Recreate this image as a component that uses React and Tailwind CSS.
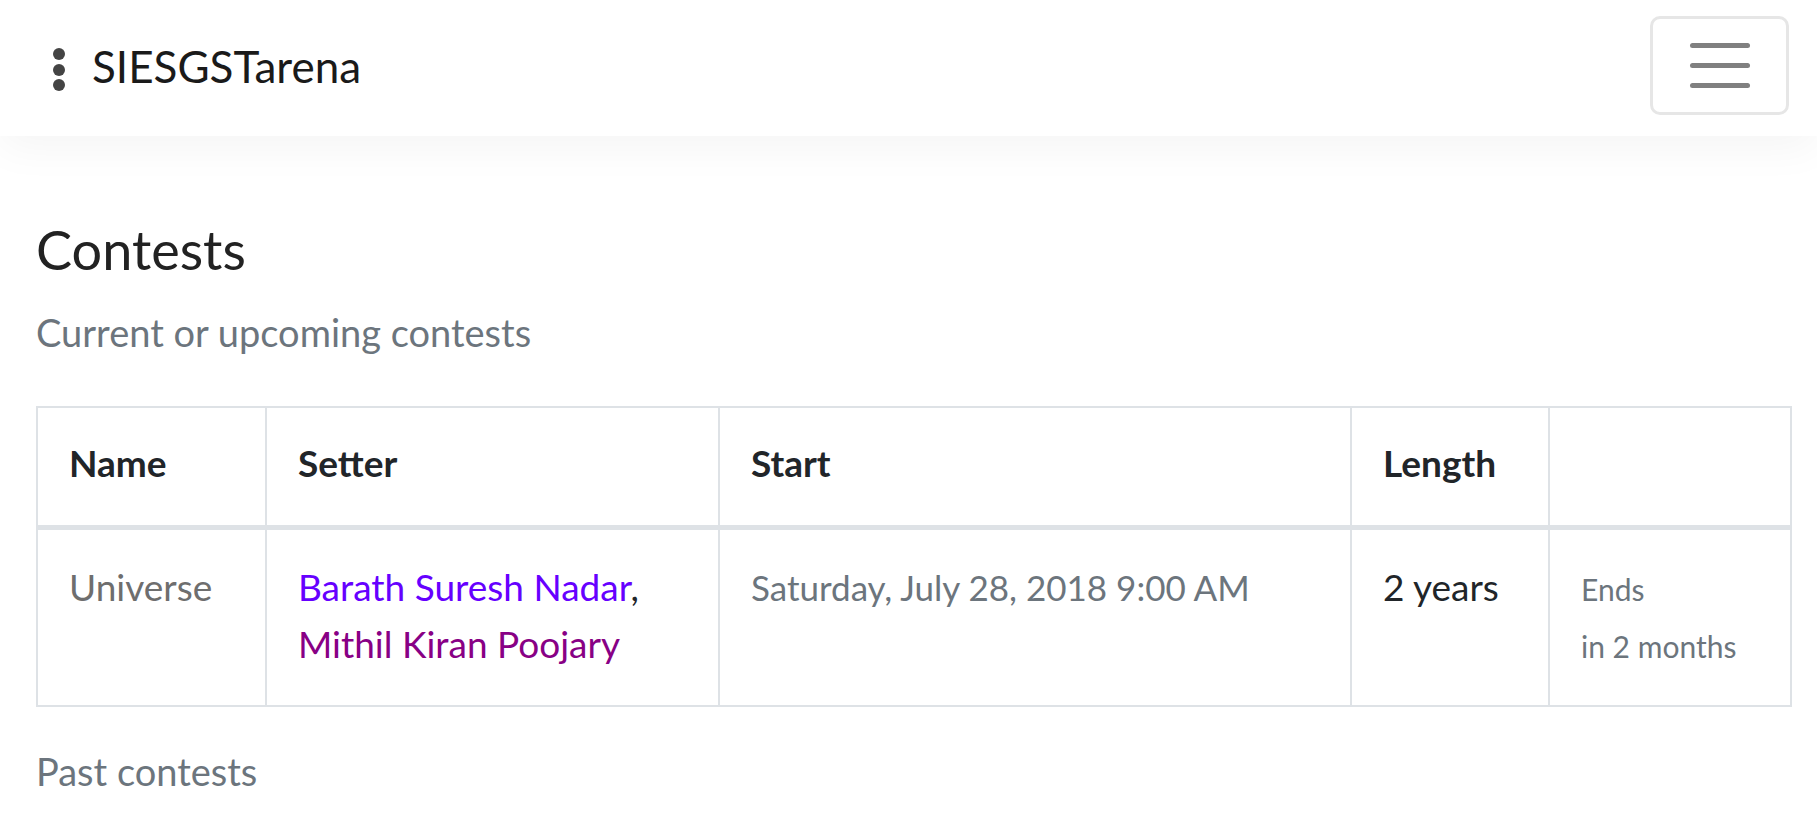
import React from 'react'

const CELL = 'border-2 border-[#dee2e6] pl-[31px] text-left align-top'

function Kebab() {
  return (
    <span className="flex flex-col items-center gap-[3.5px] pt-[8px]" aria-hidden="true">
      <span className="h-[12px] w-[12px] rounded-full bg-[#444]" />
      <span className="h-[12px] w-[12px] rounded-full bg-[#444]" />
      <span className="h-[12px] w-[12px] rounded-full bg-[#444]" />
    </span>
  )
}

function Burger() {
  return (
    <button
      type="button"
      className="flex h-[99px] w-[139px] flex-col items-center justify-center gap-[15px] rounded-[10px] border-[3px] border-[#e6e6e6] bg-white"
      aria-label="Toggle navigation"
    >
      <span className="h-[5px] w-[60px] rounded-full bg-[#808080]" />
      <span className="h-[5px] w-[60px] rounded-full bg-[#808080]" />
      <span className="h-[5px] w-[60px] rounded-full bg-[#808080]" />
    </button>
  )
}

export default function App() {
  return (
    <div className="min-h-[822px] bg-white text-[#212529] font-['Lato',sans-serif]">
      <header className="relative z-10 flex h-[136px] items-start justify-between bg-white pl-[53px] pr-[28px] pt-[16px] shadow-[0_12px_40px_rgba(0,0,0,0.045)]">
        <div className="flex h-[99px] items-center gap-[27px]">
          <Kebab />
          <span className="text-[44px] leading-none text-[#1a1a1a]">SIESGSTarena</span>
        </div>
        <Burger />
      </header>

      <main className="pl-[36px] pr-[25px] pt-[82px]">
        <h1 className="text-[54px] leading-[64px] text-[#222]">Contests</h1>
        <p className="mt-[22px] text-[38px] leading-[57px] text-[#6c757d]">Current or upcoming contests</p>

        <table className="mt-[45px] w-[1756px] table-fixed border-collapse border-2 border-[#dee2e6]">
          <colgroup>
            <col className="w-[229px]" />
            <col className="w-[453px]" />
            <col className="w-[632px]" />
            <col className="w-[198px]" />
            <col />
          </colgroup>
          <thead>
            <tr className="text-[37px] font-bold leading-[52px]">
              <th className={`${CELL} border-b-[5px] pt-[29px] pb-[36px]`}>Name</th>
              <th className={`${CELL} border-b-[5px] pt-[29px] pb-[36px]`}>Setter</th>
              <th className={`${CELL} border-b-[5px] pt-[29px] pb-[36px]`}>Start</th>
              <th className={`${CELL} border-b-[5px] pt-[29px] pb-[36px]`}>Length</th>
              <th className={`${CELL} border-b-[5px]`} />
            </tr>
          </thead>
          <tbody>
            <tr className="text-[37px] leading-[57px]">
              <td className={`${CELL} pt-[28px] pb-[33px] text-[#6e6e6e]`}>Universe</td>
              <td className={`${CELL} pt-[28px] pb-[33px]`}>
                <a href="#" className="text-[#6600ff]">Barath Suresh Nadar</a>,
                <br />
                <a href="#" className="text-[#880085]">Mithil Kiran Poojary</a>
              </td>
              <td className={`${CELL} pt-[29px] pb-[33px] text-[35px] text-[#6c757d]`}>Saturday, July 28, 2018 9:00 AM</td>
              <td className={`${CELL} pt-[28px] pb-[33px]`}>2 years</td>
              <td className={`${CELL} pt-[31px] text-[30px] text-[#6c757d]`}>
                Ends
                <br />
                in 2 months
              </td>
            </tr>
          </tbody>
        </table>

        <p className="mt-[36px] text-[38px] leading-[57px] text-[#6c757d]">Past contests</p>
      </main>
    </div>
  )
}
